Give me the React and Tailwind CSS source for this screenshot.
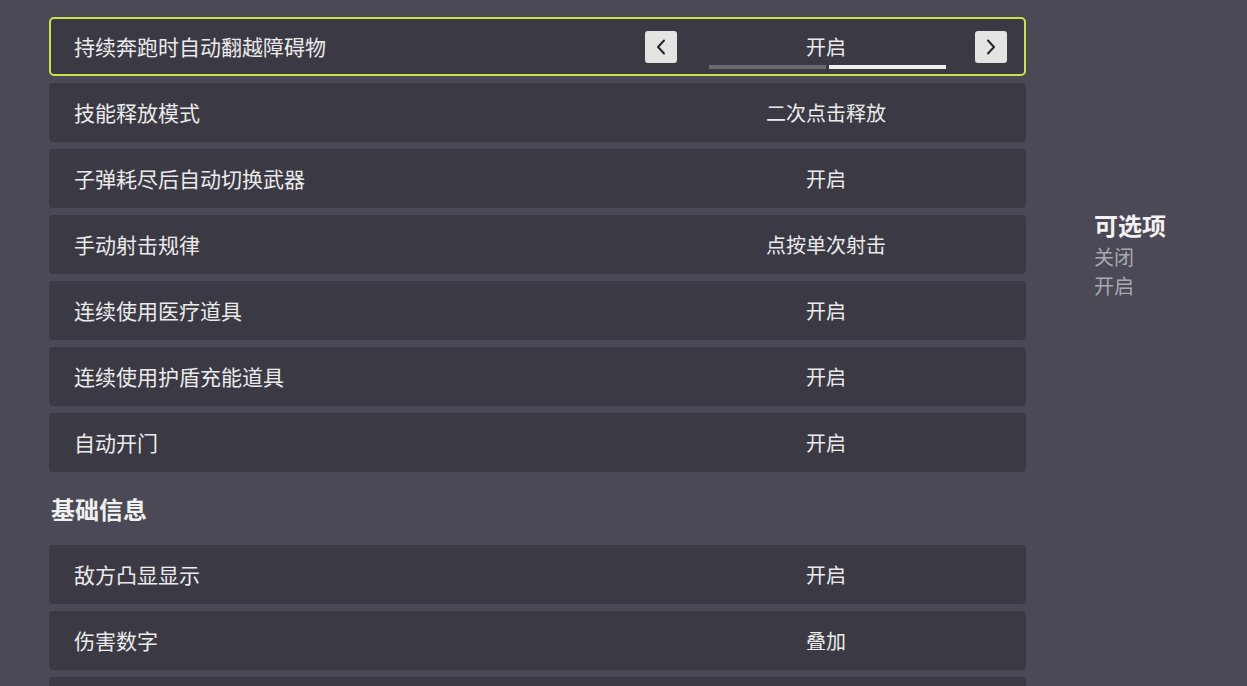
import React from "react";

const rows1 = [
  ["技能释放模式", "二次点击释放"],
  ["子弹耗尽后自动切换武器", "开启"],
  ["手动射击规律", "点按单次射击"],
  ["连续使用医疗道具", "开启"],
  ["连续使用护盾充能道具", "开启"],
  ["自动开门", "开启"],
];
const rows2 = [
  ["敌方凸显显示", "开启"],
  ["伤害数字", "叠加"],
  ["", ""],
];

function Row({ label, value }) {
  return (
    <div className="flex h-[59px] w-[977px] shrink-0 items-center rounded-[4px] bg-[#3b3a44]">
      <div className="flex-1 pl-[25px] text-[21px] text-[#ebebeb]">{label}</div>
      <div className="mr-[19px] flex w-[362px] justify-center text-[20px] text-[#ebebeb]">{value}</div>
    </div>
  );
}

function Btn({ dir }) {
  return (
    <div className="flex h-[32px] w-[32px] items-center justify-center rounded-[3px] bg-[#e6e4e2]">
      <svg width="14" height="18" viewBox="0 0 14 18" fill="none" stroke="#26262c" strokeWidth="2" strokeLinecap="round" strokeLinejoin="round">
        {dir === "l" ? <path d="M10 2.5 L4 9 L10 15.5" /> : <path d="M4 2.5 L10 9 L4 15.5" />}
      </svg>
    </div>
  );
}

export default function App() {
  return (
    <div
      className="flex h-[686px] w-[1247px] overflow-hidden bg-[#4b4956]"
      style={{ fontFamily: '"Noto Sans CJK SC", "Noto Sans", sans-serif' }}
    >
      <div className="flex shrink-0 flex-col pl-[49px] pt-[17px]">
        <div className="flex h-[59px] w-[977px] shrink-0 items-center rounded-[5px] border-2 border-[#c9e44e] bg-[#3b3a44]">
          <div className="flex-1 pl-[23px] text-[21px] text-[#ebebeb]">持续奔跑时自动翻越障碍物</div>
          <div className="relative mr-[17px] flex w-[362px] items-center justify-between">
            <Btn dir="l" />
            <div className="text-[20px] text-[#ebebeb]">开启</div>
            <Btn dir="r" />
            <div className="absolute left-[64px] top-[34px] flex gap-[3px]">
              <div className="h-[4px] w-[117px] bg-[#6c6b73]" />
              <div className="h-[4px] w-[117px] bg-[#f0f0f0]" />
            </div>
          </div>
        </div>
        <div className="mt-[7px] flex shrink-0 flex-col gap-[7px]">
          {rows1.map(([l, v]) => (
            <Row key={l} label={l} value={v} />
          ))}
        </div>
        <div className="flex h-[73px] shrink-0 items-center pl-[2px] text-[24px] font-bold text-[#f0f0f0]">基础信息</div>
        <div className="flex shrink-0 flex-col gap-[7px]">
          {rows2.map(([l, v], i) => (
            <Row key={i} label={l} value={v} />
          ))}
        </div>
      </div>
      <div className="flex flex-col pl-[68px] pt-[208px]">
        <div className="text-[24px] font-bold leading-[34px] text-[#f2f2f2]">可选项</div>
        <div className="text-[20px] leading-[29px] text-[#a9a8ae]">关闭</div>
        <div className="text-[20px] leading-[29px] text-[#a9a8ae]">开启</div>
      </div>
    </div>
  );
}
